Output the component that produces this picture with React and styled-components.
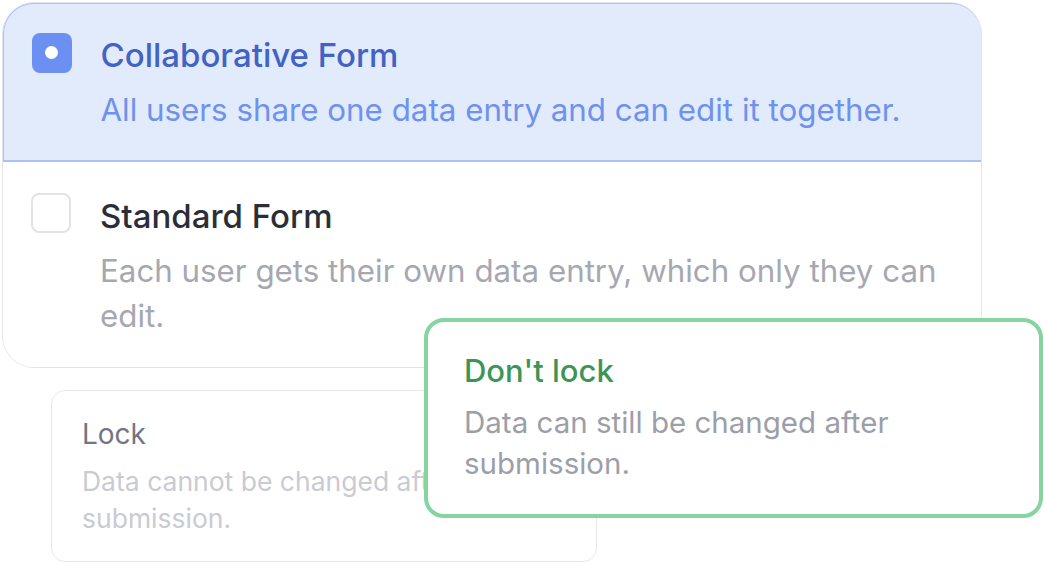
import React from "react";
import styled, { createGlobalStyle } from "styled-components";

const Global = createGlobalStyle`
  html, body { margin: 0; padding: 0; background: #ffffff; }
  body { font-family: Inter, "Noto Sans", sans-serif; -webkit-font-smoothing: antialiased; }
`;

const Page = styled.div`
  position: relative;
  width: 1044px;
  height: 566px;
  padding: 2px 0 0 2px;
  box-sizing: border-box;
  overflow: hidden;
`;

const Card = styled.div`
  width: 980px;
  box-sizing: border-box;
  border: 1.5px solid #e4e5e9;
  border-radius: 32px;
  overflow: hidden;
  background: #fff;
`;

const Option = styled.div`
  display: flex;
  align-items: flex-start;
  gap: 29px;
  padding: ${(p) => (p.$active ? "29px 28px 27px 28px" : "32px 28px 28px 28px")};
  background: ${(p) => (p.$active ? "#e2ebfc" : "#ffffff")};
  border: ${(p) => (p.$active ? "2px solid #a9c1f3" : "none")};
  border-radius: ${(p) => (p.$active ? "32px 32px 0 0" : "0")};
  margin: ${(p) => (p.$active ? "-1.5px -1.5px 0 -1.5px" : "0")};
  box-shadow: ${(p) => (p.$active ? "0 2px 0 #eceef2" : "none")};
`;

const Check = styled.div`
  flex: none;
  width: 40px;
  height: 40px;
  box-sizing: border-box;
  border-radius: 8px;
  margin-top: ${(p) => (p.$on ? "0" : "-1px")};
  display: flex;
  align-items: center;
  justify-content: center;
  background: ${(p) => (p.$on ? "#6b90f1" : "#ffffff")};
  border: ${(p) => (p.$on ? "none" : "2px solid #e2e3e7")};
`;

const Dot = styled.div`
  width: 13px;
  height: 13px;
  border-radius: 50%;
  background: #fff;
`;

const Texts = styled.div`
  display: flex;
  flex-direction: column;
  gap: 13px;
  padding-top: 2px;
`;

const Title = styled.div`
  font-size: 33px;
  line-height: 40px;
  font-weight: 500;
  color: ${(p) => (p.$active ? "#4262c4" : "#2b2e37")};
`;

const Desc = styled.div`
  font-size: 31.3px;
  line-height: 45px;
  color: ${(p) => (p.$active ? "#6e92ed" : "#a6a8b1")};
`;

const LockRow = styled.div`
  display: flex;
  padding: 22px 0 0 49px;
`;

const LockCard = styled.div`
  width: 546px;
  height: 172px;
  box-sizing: border-box;
  border: 1.5px solid #e8e9ed;
  border-radius: 14px;
  padding: 26px 30px 0 30px;
  display: flex;
  flex-direction: column;
  gap: 12px;
  background: #fff;
`;

const LockTitle = styled.div`
  font-size: 28px;
  line-height: 34px;
  color: #747582;
`;

const LockDesc = styled.div`
  font-size: 26.5px;
  line-height: 37px;
  color: #cacbd2;
  white-space: nowrap;
`;

const Popover = styled.div`
  position: absolute;
  left: 424px;
  top: 318px;
  width: 619px;
  height: 200px;
  box-sizing: border-box;
  border: 4px solid #86d5a1;
  border-radius: 20px;
  background: #fff;
  padding: 31px 36px 0 36px;
  display: flex;
  flex-direction: column;
  gap: 13px;
`;

const PopTitle = styled.div`
  font-size: 31px;
  line-height: 36px;
  font-weight: 500;
  color: #3c9557;
`;

const PopDesc = styled.div`
  font-size: 29.5px;
  line-height: 41px;
  color: #9c9ea8;
  max-width: 500px;
`;

export default function App() {
  return (
    <Page>
      <Global />
      <Card>
        <Option $active>
          <Check $on>
            <Dot />
          </Check>
          <Texts>
            <Title $active>Collaborative Form</Title>
            <Desc $active>All users share one data entry and can edit it together.</Desc>
          </Texts>
        </Option>
        <Option>
          <Check />
          <Texts>
            <Title>Standard Form</Title>
            <Desc>Each user gets their own data entry, which only they can edit.</Desc>
          </Texts>
        </Option>
      </Card>
      <LockRow>
        <LockCard>
          <LockTitle>Lock</LockTitle>
          <LockDesc>
            Data cannot be changed after
            <br />
            submission.
          </LockDesc>
        </LockCard>
      </LockRow>
      <Popover>
        <PopTitle>Don't lock</PopTitle>
        <PopDesc>Data can still be changed after submission.</PopDesc>
      </Popover>
    </Page>
  );
}
